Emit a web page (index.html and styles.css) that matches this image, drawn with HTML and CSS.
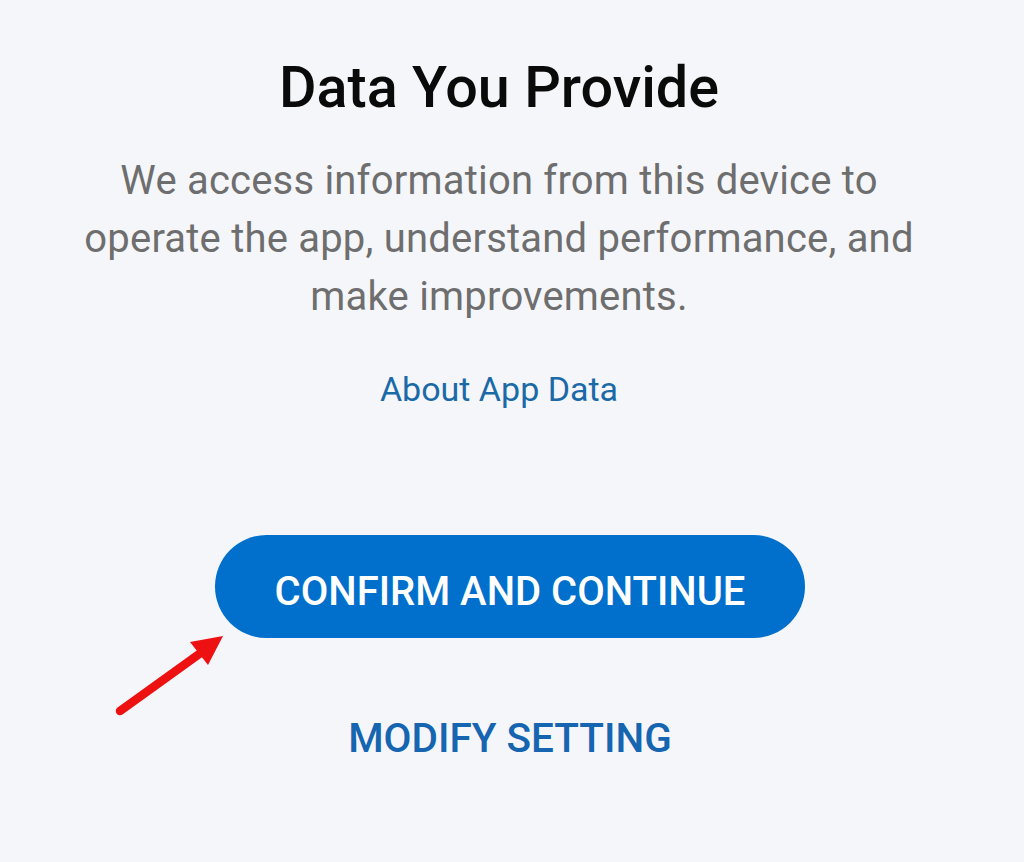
FILE: index.html
```html
<!DOCTYPE html>
<html lang="en">
<head>
  <meta charset="UTF-8">
  <title>Data You Provide</title>
  <link rel="stylesheet" href="styles.css">
</head>
<body>
  <div class="screen">
    <h1>Data You Provide</h1>
    <p class="description">
      We access information from this device to<br>
      operate the app, understand performance, and<br>
      make improvements.
    </p>
    <a class="link" href="#">About App Data</a>

    <div class="actions">
      <button class="btn-primary" type="button">CONFIRM AND CONTINUE</button>
      <button class="btn-text" type="button">MODIFY SETTING</button>
    </div>

    <!-- 注釈の赤い矢印 -->
    <svg class="arrow" width="120" height="90" viewBox="0 0 120 90">
      <line x1="10" y1="81" x2="92" y2="22" stroke="#ee1111" stroke-width="8.5" stroke-linecap="round"/>
      <polygon points="113,6 80,12 98,35" fill="#ee1111"/>
    </svg>
  </div>
</body>
</html>
```

FILE: styles.css
```css
* { box-sizing: border-box; }
body {
  margin: 0;
  background: #f5f6fa;
  font-family: Roboto, "Noto Sans", sans-serif;
}
.screen {
  width: 1024px;
  height: 862px;
  display: flex;
  flex-direction: column;
  align-items: center;
  padding: 56px 26px 0 0;
  position: relative;
}
h1 {
  margin: 0;
  font-size: 57.5px;
  font-weight: 500;
  color: #0a0a0a;
  line-height: 64px;
}
.description {
  margin: 32px 0 0;
  text-align: center;
  font-size: 40px;
  line-height: 58px;
  color: #6e6e6e;
  letter-spacing: 0.2px;
}
.link {
  margin-top: 43px;
  font-size: 34px;
  line-height: 40px;
  color: #1b6aa8;
  text-decoration: none;
}
.actions {
  margin-top: 126px;
  display: flex;
  flex-direction: column;
  align-items: center;
  padding-left: 22px;
}
.btn-primary {
  width: 590px;
  height: 103px;
  border: none;
  border-radius: 52px;
  background: #0070cc;
  color: #fff;
  font-family: Roboto, sans-serif;
  font-size: 40px;
  font-weight: 500;
  padding: 10px 0 0;
}
.btn-text {
  margin-top: 76px;
  border: none;
  background: none;
  color: #1565b0;
  font-family: Roboto, sans-serif;
  font-size: 40.5px;
  font-weight: 500;
  padding: 0;
  line-height: 48px;
}
.arrow {
  position: absolute;
  left: 110px;
  top: 630px;
}
```
